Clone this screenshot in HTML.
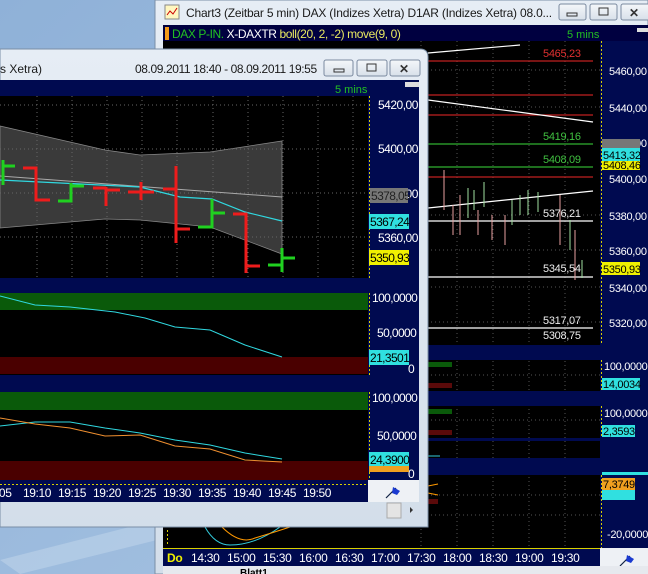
<!DOCTYPE html>
<html><head><meta charset="utf-8"><style>
html,body{margin:0;padding:0;width:648px;height:574px;overflow:hidden;background:#93b4d8}
svg{display:block;font-family:"Liberation Sans",sans-serif}
</style></head><body>
<svg width="648" height="574" viewBox="0 0 648 574" xmlns="http://www.w3.org/2000/svg">
<defs>
<linearGradient id="tb" x1="0" y1="0" x2="0" y2="1"><stop offset="0" stop-color="#e6edf5"/><stop offset="1" stop-color="#d3deea"/></linearGradient>
<linearGradient id="desk" x1="0" y1="0" x2="1" y2="1"><stop offset="0" stop-color="#8fb1d8"/><stop offset="1" stop-color="#a9c5e3"/></linearGradient>
<linearGradient id="btn" x1="0" y1="0" x2="0" y2="1"><stop offset="0" stop-color="#f4f7fa"/><stop offset="1" stop-color="#d8e0ea"/></linearGradient>
</defs>
<rect width="648" height="574" fill="url(#desk)"/>
<path d="M0 560 L157 520 L157 540 L20 574 Z" fill="#c3d7ec" opacity="0.5"/>

<!-- ===== BACK WINDOW ===== -->
<rect x="155" y="0" width="493" height="574" fill="url(#tb)" stroke="#7a8ea6"/>
<g fill="#f2f2f2" stroke="#888"><rect x="165" y="5" width="14" height="14" fill="#fff7c0"/></g>
<path d="M167 15 l3 -4 3 3 4 -6" stroke="#c00" fill="none"/>
<text x="186" y="17" font-size="12" fill="#1a1a1a" letter-spacing="-0.2">Chart3 (Zeitbar 5 min)  DAX (Indizes Xetra) D1AR (Indizes Xetra) 08.0...</text>
<g stroke="#7b8aa0" fill="url(#btn)"><rect x="559" y="4" width="27" height="16" rx="2"/><rect x="590" y="4" width="27" height="16" rx="2"/><rect x="621" y="4" width="30" height="16" rx="2"/></g>
<rect x="567" y="13" width="10" height="3" fill="none" stroke="#333"/>
<rect x="599" y="8" width="9" height="7" fill="none" stroke="#333"/>
<text x="629" y="17" font-size="12" fill="#333" font-weight="bold">✕</text>

<rect x="163" y="25" width="485" height="16" fill="#000040"/>
<rect x="165" y="27" width="4" height="13" fill="#f29a1a"/>
<text x="172" y="38" font-size="12" letter-spacing="-0.4"><tspan fill="#22c022">DAX P-IN.</tspan><tspan fill="#ffffff"> X-DAXTR</tspan><tspan fill="#e8e860"> boll(20, 2, -2) move(9, 0)</tspan></text>
<text x="567" y="38" font-size="11" fill="#22c022">5 mins</text>
<rect x="637" y="28" width="11" height="4" fill="#ddd"/>
<rect x="163" y="41" width="437" height="507" fill="#000"/>
<g stroke="#555" stroke-dasharray="1,3">
<line x1="421" y1="41" x2="421" y2="548"/><line x1="457" y1="41" x2="457" y2="548"/><line x1="493" y1="41" x2="493" y2="548"/><line x1="529" y1="41" x2="529" y2="548"/><line x1="565" y1="41" x2="565" y2="548"/>
<line x1="163" y1="70" x2="600" y2="70"/><line x1="163" y1="107" x2="600" y2="107"/><line x1="163" y1="215" x2="600" y2="215"/><line x1="163" y1="250" x2="600" y2="250"/><line x1="163" y1="287" x2="600" y2="287"/><line x1="163" y1="322" x2="600" y2="322"/>
<line x1="163" y1="375" x2="600" y2="375"/><line x1="163" y1="420" x2="600" y2="420"/><line x1="163" y1="495" x2="600" y2="495"/><line x1="163" y1="515" x2="600" y2="515"/>
</g>
<g stroke-width="1.2">
<line x1="428" y1="61" x2="593" y2="61" stroke="#c02020"/>
<line x1="428" y1="95" x2="593" y2="95" stroke="#c02020"/>
<line x1="428" y1="115" x2="593" y2="115" stroke="#c02020"/>
<line x1="428" y1="177" x2="593" y2="177" stroke="#c02020"/>
<line x1="428" y1="144" x2="593" y2="144" stroke="#30b030"/>
<line x1="428" y1="167" x2="593" y2="167" stroke="#30b030"/>
<line x1="428" y1="221" x2="593" y2="221" stroke="#fff"/>
<line x1="428" y1="277" x2="593" y2="277" stroke="#fff"/>
<line x1="428" y1="328" x2="593" y2="328" stroke="#fff"/>
<line x1="428" y1="53" x2="520" y2="45" stroke="#fff"/>
<line x1="428" y1="100" x2="593" y2="122" stroke="#fff"/>
<line x1="428" y1="208" x2="593" y2="191" stroke="#fff"/>
</g>
<g stroke-width="1" stroke="#e8a0a0" fill="none">
<path d="M444 170v40M453 205v30M460 195v40M478 210v25M492 215v25M505 215v30M560 195v50M575 230v50"/>
</g>
<g stroke-width="1" stroke="#a0e0a0" fill="none">
<path d="M468 188v30M474 190v20M484 182v25M512 200v25M520 195v20M528 190v25M538 192v20M570 220v30M582 260v18"/>
</g>
<g font-size="11" letter-spacing="-0.3">
<text x="543" y="57" fill="#e03030">5465,23</text>
<text x="543" y="140" fill="#40c040">5419,16</text>
<text x="543" y="163" fill="#40c040">5408,09</text>
<text x="543" y="217" fill="#eee">5376,21</text>
<text x="543" y="272" fill="#eee">5345,54</text>
<text x="543" y="324" fill="#eee">5317,07</text>
<text x="543" y="339" fill="#eee">5308,75</text>
</g>
<g fill="#000a50">
<rect x="163" y="345" width="485" height="15"/>
<rect x="163" y="391" width="485" height="15"/>
<rect x="163" y="438" width="485" height="3"/>
<rect x="163" y="458" width="485" height="17"/>
</g>
<g><rect x="428" y="362" width="24" height="5" fill="#0a5a0a"/><rect x="428" y="383" width="24" height="5" fill="#5a0a0a"/>
<rect x="428" y="409" width="24" height="5" fill="#0a5a0a"/><rect x="428" y="430" width="24" height="5" fill="#5a0a0a"/>
<rect x="428" y="499" width="10" height="5" fill="#5a0a0a"/>
<line x1="428" y1="456" x2="440" y2="456" stroke="#3cd"/>
<path d="M428 486 l10 -2M428 493 l10 2" stroke="#f90"/>
</g>
<rect x="600" y="41" width="48" height="507" fill="#000a50"/>
<line x1="601.5" y1="41" x2="601.5" y2="345" stroke="#d8d000" stroke-dasharray="2,2"/>
<line x1="601.5" y1="360" x2="601.5" y2="391" stroke="#d8d000" stroke-dasharray="2,2"/>
<line x1="601.5" y1="406" x2="601.5" y2="438" stroke="#d8d000" stroke-dasharray="2,2"/>
<line x1="601.5" y1="475" x2="601.5" y2="548" stroke="#d8d000" stroke-dasharray="2,2"/>
<g font-size="11" fill="#fff" letter-spacing="-0.3">
<text x="609" y="75">5460,00</text><text x="609" y="112">5440,00</text><text x="609" y="147">5420,00</text>
<text x="609" y="183">5400,00</text><text x="609" y="220">5380,00</text><text x="609" y="255">5360,00</text>
<text x="609" y="292">5340,00</text><text x="609" y="327">5320,00</text>
<text x="604" y="370">100,0000</text><text x="604" y="417">100,0000</text><text x="607" y="538">-20,0000</text>
</g>
<rect x="602" y="139" width="38" height="11" fill="#777"/>
<rect x="602" y="158" width="38" height="12" fill="#f0f000"/>
<rect x="602" y="148" width="38" height="13" fill="#30e0e0"/>
<text x="603" y="159" font-size="11" fill="#000" letter-spacing="-0.3">5413,32</text>
<text x="603" y="169" font-size="11" fill="#000" letter-spacing="-0.3">5408,46</text>
<rect x="602" y="262" width="38" height="13" fill="#f0f000"/><text x="603" y="273" font-size="11" fill="#000" letter-spacing="-0.3">5350,93</text>
<rect x="602" y="378" width="38" height="12" fill="#30e0e0"/><text x="603" y="388" font-size="11" fill="#000" letter-spacing="-0.3">14,0034</text>
<rect x="602" y="425" width="33" height="12" fill="#30e0e0"/><text x="603" y="435" font-size="11" fill="#000" letter-spacing="-0.3">2,3593</text>
<rect x="602" y="472" width="46" height="3" fill="#30e0e0"/>
<rect x="602" y="490" width="33" height="10" fill="#30e0e0"/>
<rect x="602" y="478" width="33" height="12" fill="#f0a020"/><text x="603" y="488" font-size="11" fill="#000" letter-spacing="-0.3">7,3749</text>
<path d="M205 527 Q215 545 230 545 Q255 545 280 527" stroke="#3cd" fill="none"/>
<path d="M222 527 Q240 545 255 538 Q275 532 290 527" stroke="#f90" fill="none"/>
<line x1="167.5" y1="530" x2="167.5" y2="546" stroke="#d8d000" stroke-dasharray="2,2"/>
<rect x="163" y="548" width="437" height="18" fill="#000a50"/>
<line x1="163" y1="548.5" x2="600" y2="548.5" stroke="#d8d000"/>
<g font-size="12" fill="#fff" letter-spacing="-0.3">
<text x="167" y="562" fill="#f0f000" font-weight="bold">Do</text>
<text x="191" y="562">14:30</text><text x="227" y="562">15:00</text><text x="263" y="562">15:30</text><text x="299" y="562">16:00</text><text x="335" y="562">16:30</text><text x="371" y="562">17:00</text><text x="407" y="562">17:30</text><text x="443" y="562">18:00</text><text x="479" y="562">18:30</text><text x="515" y="562">19:00</text><text x="551" y="562">19:30</text>
</g>
<rect x="600" y="548" width="48" height="18" fill="#eef1f5"/>
<path d="M620 566 L630 556" stroke="#124" stroke-width="1.2"/><path d="M627 555 l7 4 -3 4 -5 -2z" fill="#1a3ad0"/>
<rect x="163" y="566" width="485" height="8" fill="#e6e9ee"/>
<text x="240" y="576" font-size="10" fill="#000" font-weight="bold">Blatt1</text>

<!-- ===== FRONT WINDOW ===== -->
<path d="M0 49 H420 Q428 49 428 57 V527 H0 Z" fill="url(#tb)" stroke="#7a8ea6"/>
<text x="0" y="73" font-size="12" fill="#1a1a1a">s Xetra)</text>
<text x="135" y="73" font-size="12" fill="#1a1a1a" letter-spacing="-0.4">08.09.2011 18:40 - 08.09.2011 19:55</text>
<g stroke="#7b8aa0" fill="url(#btn)"><rect x="324" y="60" width="29" height="16" rx="2"/><rect x="357" y="60" width="30" height="16" rx="2"/><rect x="390" y="60" width="30" height="16" rx="2"/></g>
<rect x="334" y="69" width="10" height="3" fill="none" stroke="#333"/>
<rect x="367" y="64" width="9" height="7" fill="none" stroke="#333"/>
<text x="399" y="73" font-size="12" fill="#333" font-weight="bold">✕</text>

<rect x="0" y="80" width="419" height="16" fill="#000a50"/>
<text x="335" y="93" font-size="11" fill="#22c022">5 mins</text>
<rect x="405" y="82" width="14" height="5" fill="#ddd"/>
<rect x="0" y="96" width="368" height="182" fill="#000"/>
<path d="M0 126 L105 150 L140 155 L210 152 L282 141 L282 254 L210 227 L140 220 L105 219 L0 228 Z" fill="#3a3a3a" stroke="#888" stroke-width="0.8"/>
<g stroke="#666" stroke-dasharray="1,3">
<line x1="37" y1="96" x2="37" y2="484"/><line x1="72" y1="96" x2="72" y2="484"/><line x1="107" y1="96" x2="107" y2="484"/><line x1="142" y1="96" x2="142" y2="484"/><line x1="177" y1="96" x2="177" y2="484"/><line x1="213" y1="96" x2="213" y2="484"/><line x1="248" y1="96" x2="248" y2="484"/><line x1="283" y1="96" x2="283" y2="484"/><line x1="318" y1="96" x2="318" y2="484"/><line x1="353" y1="96" x2="353" y2="484"/>
<line x1="0" y1="105" x2="368" y2="105"/><line x1="0" y1="149" x2="368" y2="149"/><line x1="0" y1="193" x2="368" y2="193"/><line x1="0" y1="237" x2="368" y2="237"/>
<line x1="0" y1="315" x2="368" y2="315"/><line x1="0" y1="337" x2="368" y2="337"/><line x1="0" y1="355" x2="368" y2="355"/>
<line x1="0" y1="418" x2="368" y2="418"/><line x1="0" y1="440" x2="368" y2="440"/><line x1="0" y1="460" x2="368" y2="460"/>
</g>
<polyline points="0,176 282,197" stroke="#aaa" fill="none"/>
<polyline points="0,180 140,187 180,197 212,199 245,212 282,221" stroke="#30d8e0" fill="none" stroke-width="1.2"/>
<g stroke-width="3" fill="none">
<path d="M3 160V185M3 166H15" stroke="#20d020"/>
<path d="M23 168H36V200H50" stroke="#ee1c1c"/>
<path d="M58 201H71V183M71 186H84" stroke="#20d020"/>
<path d="M93 188H106M106 187V206M106 190H120" stroke="#ee1c1c"/>
<path d="M128 192H154M141 182V200" stroke="#ee1c1c"/>
<path d="M163 189H176M176 166V243M176 229H190" stroke="#ee1c1c"/>
<path d="M198 227H212V199M212 213H225" stroke="#20d020"/>
<path d="M233 214H246V273M246 266H260" stroke="#ee1c1c"/>
<path d="M268 265H282M282 248V272M282 258H295" stroke="#20d020"/>
</g>
<rect x="368" y="96" width="51" height="182" fill="#000a50"/>
<line x1="369.5" y1="96" x2="369.5" y2="278" stroke="#d8d000" stroke-dasharray="2,2"/>
<g font-size="12" fill="#fff" letter-spacing="-0.5">
<text x="378" y="109">5420,00</text><text x="378" y="153">5400,00</text><text x="378" y="198">5380,00</text><text x="378" y="242">5360,00</text>
</g>
<rect x="370" y="188" width="38" height="15" fill="#777"/><text x="371" y="200" font-size="12" fill="#222" letter-spacing="-0.6">5378,05</text>
<rect x="369" y="214" width="40" height="15" fill="#30e0e0"/><text x="370" y="226" font-size="12" fill="#000" letter-spacing="-0.6">5367,24</text>
<rect x="369" y="250" width="40" height="15" fill="#f0f000"/><text x="370" y="262" font-size="12" fill="#000" letter-spacing="-0.6">5350,93</text>
<rect x="0" y="278" width="419" height="15" fill="#000a50"/>
<rect x="0" y="293" width="368" height="82" fill="#000"/>
<rect x="0" y="293" width="368" height="17" fill="#0a5a0a"/>
<rect x="0" y="357" width="368" height="17" fill="#4a0000"/>
<polyline points="0,296 35,305 70,307 115,312 145,318 175,327 210,330 245,345 282,357" stroke="#30d8e0" fill="none"/>
<rect x="368" y="293" width="51" height="82" fill="#000a50"/>
<line x1="369.5" y1="293" x2="369.5" y2="375" stroke="#d8d000" stroke-dasharray="2,2"/>
<g font-size="12" fill="#fff" letter-spacing="-0.6"><text x="372" y="302">100,0000</text><text x="377" y="337">50,0000</text><text x="408" y="373">0</text></g>
<rect x="369" y="350" width="40" height="15" fill="#30e0e0"/><text x="370" y="362" font-size="12" fill="#000" letter-spacing="-0.6">21,3501</text>
<rect x="0" y="375" width="419" height="17" fill="#000a50"/>
<rect x="0" y="392" width="368" height="88" fill="#000"/>
<rect x="0" y="392" width="368" height="18" fill="#0a5a0a"/>
<rect x="0" y="461" width="368" height="19" fill="#4a0000"/>
<polyline points="0,426 35,422 70,422 105,428 140,433 175,440 210,445 245,453 282,459" stroke="#30d8e0" fill="none"/>
<polyline points="0,418 35,424 70,428 105,436 140,435 175,446 210,449 245,460 282,462" stroke="#f09030" fill="none"/>
<rect x="368" y="392" width="51" height="88" fill="#000a50"/>
<line x1="369.5" y1="392" x2="369.5" y2="480" stroke="#d8d000" stroke-dasharray="2,2"/>
<g font-size="12" fill="#fff" letter-spacing="-0.6"><text x="372" y="402">100,0000</text><text x="377" y="440">50,0000</text><text x="408" y="478">0</text></g>
<rect x="369" y="464" width="40" height="8" fill="#f0a020"/>
<rect x="369" y="452" width="40" height="14" fill="#30e0e0"/><text x="370" y="464" font-size="12" fill="#000" letter-spacing="-0.6">24,3900</text>
<rect x="0" y="480" width="368" height="22" fill="#000a50"/>
<line x1="0" y1="484.5" x2="368" y2="484.5" stroke="#d8d000" stroke-dasharray="2,2"/>
<g font-size="12" fill="#fff" letter-spacing="-0.4">
<text x="-4" y="497">:05</text><text x="23" y="497">19:10</text><text x="58" y="497">19:15</text><text x="93" y="497">19:20</text><text x="128" y="497">19:25</text><text x="163" y="497">19:30</text><text x="198" y="497">19:35</text><text x="233" y="497">19:40</text><text x="268" y="497">19:45</text><text x="303" y="497">19:50</text>
</g>
<rect x="368" y="480" width="51" height="22" fill="#eef1f5"/>
<path d="M386 498 L396 488" stroke="#124" stroke-width="1.2"/><path d="M393 487 l7 4 -3 4 -5 -2z" fill="#1a3ad0"/>
<rect x="387" y="503" width="14" height="15" fill="#e4e4e4" stroke="#aaa"/>
<path d="M410 507 l3 3 -3 3z" fill="#333"/>
</svg>
</body></html>
